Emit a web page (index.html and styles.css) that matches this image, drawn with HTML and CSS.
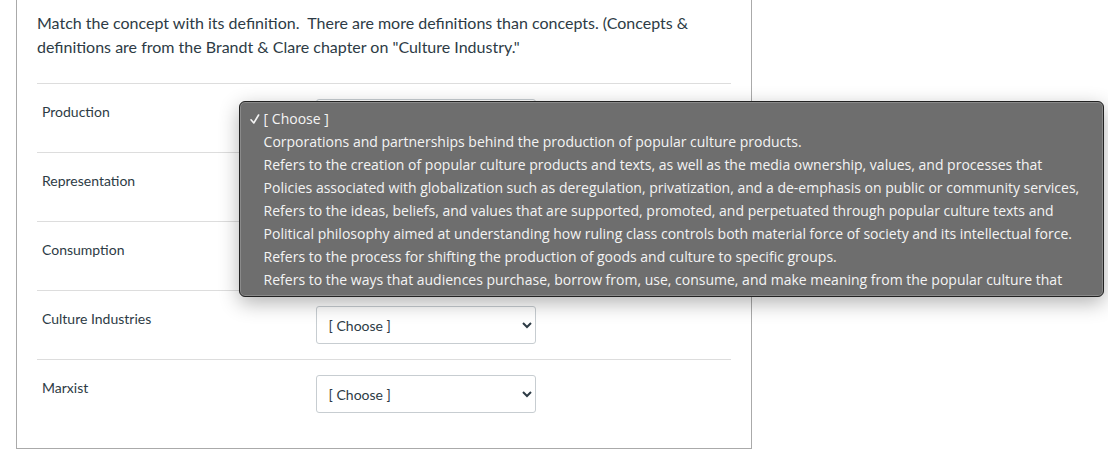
FILE: index.html
```html
<!DOCTYPE html>
<html lang="en">

<head>
    <meta charset="UTF-8">
    <meta name="viewport" content="width=device-width, initial-scale=1.0">
    <title>Culture Industry Quiz</title>
    <link rel="stylesheet" href="styles.css">
</head>

<body>
    <form class="question">
        <p class="question-text">Match the concept with its definition.&nbsp; There are more definitions than concepts. (Concepts &amp; definitions are from the Brandt &amp; Clare chapter on "Culture Industry."</p>

        <div class="answer">
            <label for="answer1">Production</label>
            <div class="answer-right">
                <select id="answer1" name="answer1">
                    <option>[ Choose ]</option>
                </select>
                <!-- open list of the first drop-down -->
                <ul class="menu" role="listbox" aria-label="Production">
                    <li role="option" aria-selected="true" class="selected">
                        <svg class="check" viewBox="0 0 10 10" aria-hidden="true">
                            <path d="M1 5.8 L3.8 9 L8.6 1" />
                        </svg>[ Choose ]
                    </li>
                    <li role="option">Corporations and partnerships behind the production of popular culture products.</li>
                    <li role="option">Refers to the creation of popular culture products and texts, as well as the media ownership, values, and processes that</li>
                    <li role="option">Policies associated with globalization such as deregulation, privatization, and a de-emphasis on public or community services,</li>
                    <li role="option">Refers to the ideas, beliefs, and values that are supported, promoted, and perpetuated through popular culture texts and</li>
                    <li role="option">Political philosophy aimed at understanding how ruling class controls both material force of society and its intellectual force.</li>
                    <li role="option">Refers to the process for shifting the production of goods and culture to specific groups.</li>
                    <li role="option">Refers to the ways that audiences purchase, borrow from, use, consume, and make meaning from the popular culture that</li>
                </ul>
            </div>
        </div>

        <div class="answer">
            <label for="answer2">Representation</label>
            <div class="answer-right">
                <select id="answer2" name="answer2">
                    <option>[ Choose ]</option>
                </select>
            </div>
        </div>

        <div class="answer">
            <label for="answer3">Consumption</label>
            <div class="answer-right">
                <select id="answer3" name="answer3">
                    <option>[ Choose ]</option>
                </select>
            </div>
        </div>

        <div class="answer">
            <label for="answer4">Culture Industries</label>
            <div class="answer-right">
                <select id="answer4" name="answer4">
                    <option>[ Choose ]</option>
                </select>
            </div>
        </div>

        <div class="answer">
            <label for="answer5">Marxist</label>
            <div class="answer-right">
                <select id="answer5" name="answer5">
                    <option>[ Choose ]</option>
                </select>
            </div>
        </div>
    </form>
</body>

</html>
```

FILE: styles.css
```css
* {
    box-sizing: border-box;
}

body {
    margin: 0;
    padding: 0 16px;
    background-color: white;
    color: #2d3b45;
    font-family: Lato, "Liberation Sans", sans-serif;
    font-size: 14px;
}

.question {
    max-width: 736px;
    padding: 11px 20px 20px;
    border: 1px solid #aaa;
    border-top: none;
}

.question-text {
    margin: 0 0 24px;
    font-size: 16px;
    line-height: 24px;
}

.answer {
    display: grid;
    grid-template-columns: 2fr 3fr;
    align-items: start;
    padding: 15px 0;
    border-top: 1px solid #ddd;
}

.answer label {
    padding: 3px 5px;
    line-height: 20px;
}

.answer-right {
    position: relative;
    padding-left: 1px;
}

select {
    display: block;
    width: 220px;
    height: 38px;
    padding: 0 8px;
    border: 1px solid #c7cdd1;
    border-radius: 3px;
    background-color: white;
    color: #2d3b45;
    font-family: inherit;
    font-size: 14px;
}

.menu {
    position: absolute;
    top: 2px;
    left: -76px;
    z-index: 1;
    margin: 0;
    padding: 5px 24px;
    border: 1px solid #222;
    border-radius: 6px;
    background-color: #6e6e6e;
    box-shadow: inset 0 0 0 1px #8a8a8a, 0 6px 20px rgba(0, 0, 0, 0.3);
    color: #f4f4f4;
    font-family: "Open Sans", "Liberation Sans", sans-serif;
    font-size: 14px;
    line-height: 23px;
    list-style: none;
    white-space: nowrap;
}

.menu .selected {
    display: flex;
    align-items: center;
    gap: 4px;
    margin-left: -14px;
}

.check {
    width: 10px;
    height: 10px;
    fill: none;
    stroke: #f4f4f4;
    stroke-width: 1.6;
    stroke-linecap: round;
    stroke-linejoin: round;
}
```
